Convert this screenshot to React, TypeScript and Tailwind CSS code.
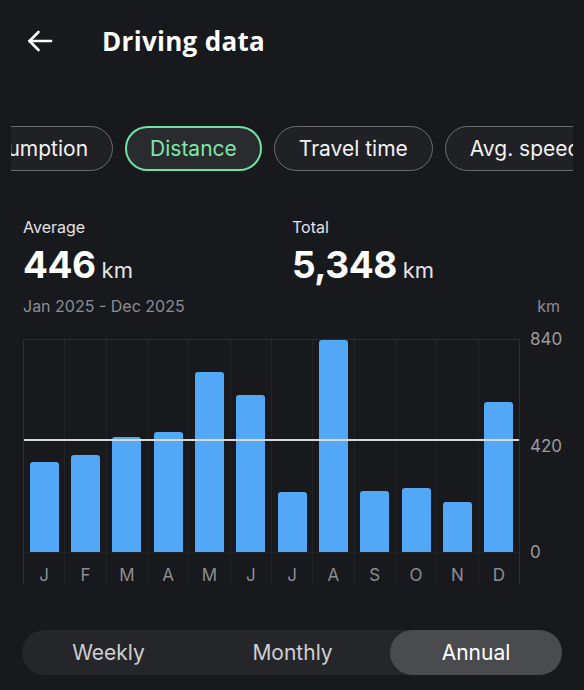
import React from 'react'

const MONTHS = ['J', 'F', 'M', 'A', 'M', 'J', 'J', 'A', 'S', 'O', 'N', 'D']
const VALUES = [356, 383, 453, 474, 711, 619, 237, 836, 241, 252, 197, 591]
const MAX_KM = 840
const AVERAGE_KM = 446
const PLOT_HEIGHT = 213

const CHIPS = [
  { label: 'Consumption', active: false },
  { label: 'Distance', active: true },
  { label: 'Travel time', active: false },
  { label: 'Avg. speed', active: false },
]

function BackArrow() {
  return (
    <svg width="26" height="22" viewBox="0 0 26 22" fill="none" stroke="white" strokeWidth="2.6" strokeLinecap="round" strokeLinejoin="round">
      <path d="M2.5 11H24" />
      <path d="M11.5 2L2.5 11L11.5 20" />
    </svg>
  )
}

export default function App() {
  return (
    <div className="w-[584px] h-[690px] overflow-hidden bg-[#18191d] text-white font-['Inter','Noto_Sans',sans-serif]">
      {/* Header */}
      <div className="h-[82px] flex items-center pl-[27px]">
        <BackArrow />
        <h1 className="ml-[49px] text-[26px] font-bold tracking-[0.3px] font-['Open_Sans','Inter',sans-serif]">Driving data</h1>
      </div>

      {/* Metric chips */}
      <div className="mt-[44px] mx-[11px] overflow-hidden">
        <div className="flex gap-3 ml-[-80px]">
          {CHIPS.map((chip) => (
            <div
              key={chip.label}
              className={
                chip.active
                  ? 'shrink-0 h-[45px] px-[23px] flex items-center rounded-full border-[2.5px] border-[#6fe3a0] bg-[#2a2b2f] text-[#7be8a8] text-[21px]'
                  : 'shrink-0 h-[45px] px-[24px] flex items-center rounded-full border-[1.5px] border-[#6a6b70] bg-[#202125] text-[#f2f2f2] text-[21px]'
              }
            >
              {chip.label}
            </div>
          ))}
        </div>
      </div>

      {/* Summary */}
      <div className="mt-[46px] px-[23px] flex">
        <div className="w-[269px]">
          <div className="text-[16px] leading-[20px] text-[#e4e4e6]">Average</div>
          <div className="mt-[6px] flex items-baseline gap-[6px]">
            <span className="text-[37px] leading-[44px] font-bold tracking-[-0.5px]">446</span>
            <span className="text-[22px] text-[#e4e4e6]">km</span>
          </div>
        </div>
        <div>
          <div className="text-[16px] leading-[20px] text-[#e4e4e6]">Total</div>
          <div className="mt-[6px] flex items-baseline gap-[6px]">
            <span className="text-[37px] leading-[44px] font-bold tracking-[-0.5px]">5,348</span>
            <span className="text-[22px] text-[#e4e4e6]">km</span>
          </div>
        </div>
      </div>

      <div className="mt-[8px] px-[23px] flex justify-between text-[16px] leading-[22px] text-[#8c8d92]">
        <span>Jan 2025 - Dec 2025</span>
        <span className="mr-[1px]">km</span>
      </div>

      {/* Chart */}
      <div className="mt-[22px] pl-[23px] flex">
        <div className="relative w-[497px] border-l border-t border-r border-[#2c2d31] flex">
          {VALUES.map((v, i) => (
            <div
              key={i}
              className={
                i < VALUES.length - 1
                  ? 'flex-1 flex flex-col border-r border-dotted border-[#2d2e33]'
                  : 'flex-1 flex flex-col'
              }
            >
              <div className="h-[213px] flex items-end justify-center border-b border-[#222327]">
                <div
                  className="w-[29px] rounded-t-[3px] bg-[#52a8f7]"
                  style={{ height: `${(v / MAX_KM) * PLOT_HEIGHT}px` }}
                />
              </div>
              <div className="h-[31px] pt-[11px] text-center leading-[22px] text-[17px] text-[#8c8d92]">
                {MONTHS[i]}
              </div>
            </div>
          ))}
          {/* Average line */}
          <div
            className="absolute left-0 right-0 h-[2px] bg-[#d9d9dc]"
            style={{ top: `${PLOT_HEIGHT - (AVERAGE_KM / MAX_KM) * PLOT_HEIGHT - 1}px` }}
          />
        </div>
        <div className="ml-[10px] h-[233px] -mt-[10px] flex flex-col justify-between text-[17px] leading-[20px] text-[#9a9b9f]">
          <span>840</span>
          <span>420</span>
          <span>0</span>
        </div>
      </div>

      {/* Period switch */}
      <div className="mt-[46px] mx-[22px] h-[45px] rounded-full bg-[#25262a] flex text-[21px]">
        <div className="w-[173px] flex items-center justify-center text-[#cfcfd2]">Weekly</div>
        <div className="w-[195px] flex items-center justify-center text-[#cfcfd2]">Monthly</div>
        <div className="flex-1 flex items-center justify-center rounded-full bg-[#4a4b4f] text-white">Annual</div>
      </div>
    </div>
  )
}
